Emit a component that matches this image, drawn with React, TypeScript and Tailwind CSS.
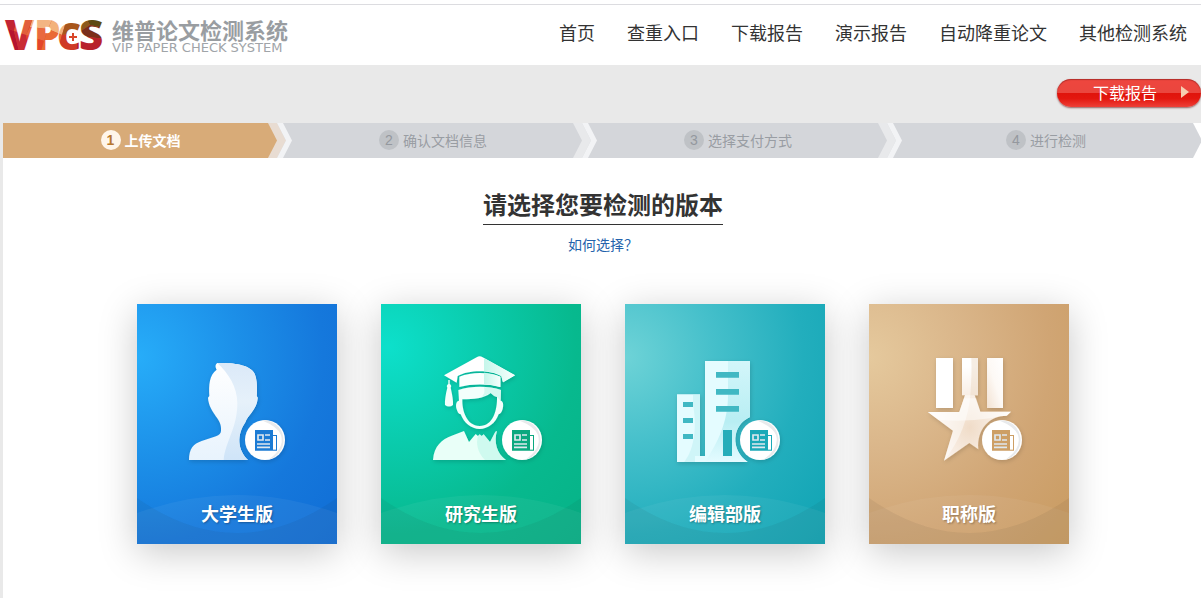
import React from "react";

type Card = {
  id: string;
  label: string;
  viewBox: string;
  badgeX: number;
  gradient: string;
  ink: string;
  art: React.ReactNode;
};

const navItems = ["首页", "查重入口", "下载报告", "演示报告", "自动降重论文", "其他检测系统"];

const steps = [
  { label: "上传文档", grow: "flex-[290]" },
  { label: "确认文档信息", grow: "flex-[305]" },
  { label: "选择支付方式", grow: "flex-[305]" },
  { label: "进行检测", grow: "flex-[298]" },
];

const cards: Card[] = [
  {
    id: "student",
    label: "大学生版",
    viewBox: "21 27 600 720",
    badgeX: 405,
    gradient: "bg-[radial-gradient(circle_at_0%_22%,#27adf9_0%,#1c8fe8_38%,#1578dc_68%,#106dd5_100%)]",
    ink: "#1c7bd4",
    art: (
      <>
        <path
          d="M177 495C177 462 190 446 215 438L258 424Q273 418 273 408V398C273 370 237 352 234 308L238 303C236 270 238 240 260 224C254 214 257 207 262 204C310 202 362 210 373 235C381 250 382 280 380 303L383 308C381 345 352 360 346 382C320 420 322 465 354 495Z"
          fill="url(#student-a)"
        />
        <path
          d="M262 204C310 202 362 210 373 235C381 250 382 280 380 303L383 308C381 345 352 360 346 382C320 420 322 465 354 495H281C286 440 322 400 322 325C322 275 295 235 262 204Z"
          fill="url(#student-b)"
        />
      </>
    ),
  },
  {
    id: "graduate",
    label: "研究生版",
    viewBox: "18 27 600 720",
    badgeX: 441,
    gradient: "bg-[radial-gradient(circle_at_4%_18%,#0de0cb_0%,#0acbac_35%,#07b98e_68%,#07b287_100%)]",
    ink: "#0ba87f",
    art: (
      <>
        <path d="M207 241L305 187Q314 180 323 187L420 241L384 262L379 243C345 224 282 224 248 243L245 263Z" fill="#fff" />
        <path d="M323 187L420 241L384 262L379 243C365 235 347 230 327 229V189Z" fill="url(#cap)" />
        <path d="M253 245C290 230 340 230 376 245V276C340 266 290 266 253 276Z" fill="#fbfffe" />
        <path d="M327 233Q356 236 376 245V276Q350 269 327 268Z" fill="url(#cap)" />
        <path
          d="M250 285C290 272 340 272 378 285L377 317C385 318 386 330 383 342C380 352 376 357 371 358C362 384 340 402 314 402C288 402 267 384 257 358C250 357 247 350 244 340C242 328 244 318 252 317ZM262 313C261 345 274 393 314 393C354 393 367 345 366 306Q355 303 347 294C325 311 298 312 262 313Z"
          fill="#f3fffc"
          fillRule="evenodd"
        />
        <path d="M327 277Q356 277 378 285L377 317L366 306Q355 303 347 294L318 307Q333 296 327 277Z" fill="#b7f4e5" opacity=".5" />
        <path d="M220 255H224V267Q231 272 227 278C232 300 235 317 234 330Q222 339 210 330C209 316 212 298 217 278Q213 272 220 267Z" fill="#f3fffc" />
        <path
          d="M174 495C177 452 201 433 230 422L267 408L282 441L302 417L309 423L314 418L320 423L326 418L345 441L361 410L366 408C356 440 365 475 393 495Z"
          fill="#e9fff8"
        />
        <path d="M309 423L314 418L320 423L326 418L345 441L361 410L366 408C356 440 365 475 393 495H330C306 470 303 445 309 423Z" fill="#b5f6e6" opacity=".5" />
      </>
    ),
  },
  {
    id: "editor",
    label: "编辑部版",
    viewBox: "30 27 600 720",
    badgeX: 435,
    gradient: "bg-[radial-gradient(circle_at_0%_22%,#6ed3d7_0%,#46c0cb_32%,#22aebd_65%,#0fa3b3_100%)]",
    ink: "#1ca9b8",
    art: (
      <>
        <path d="M186 298H255V483H270V198H405V366C350 390 345 465 398 501H186Z" fill="#e4fcff" />
        <path d="M339 198H405V366C350 390 345 465 398 501H270C310 440 339 380 339 300Z" fill="url(#editor-b)" />
        <path d="M234 298H255V483H240V501H208C240 460 246 390 234 330Z" fill="#b9edf1" opacity=".5" />
        <g fill="#3fb8c3">
          <path d="M303 231H372V248H303ZM303 282H372V299H303ZM303 333H372V350H303Z" />
          <path d="M204 321H234V336H204ZM204 369H234V384H204ZM204 417H234V432H204Z" />
          <path d="M324 405H351V483H324Z" fill="#27adb9" />
        </g>
      </>
    ),
  },
  {
    id: "title",
    label: "职称版",
    viewBox: "27 27 600 720",
    badgeX: 426,
    gradient: "bg-[radial-gradient(circle_at_0%_22%,#e5c99d_0%,#dab68a_34%,#d0a574_66%,#c99b60_100%)]",
    ink: "#cd9f65",
    art: (
      <>
        <path d="M228 189H279V339H228Z" fill="#fff" />
        <path d="M306 189H354V301H344L361 350H453L440 362C390 362 350 400 355 463L328 444L252 497L279 407L204 351H298L315 301H306Z" fill="url(#title-a)" />
        <path d="M334 189H354V301H331Q336 240 334 189Z" fill="#ecd6c1" opacity=".45" />
        <path d="M204 351H298L315 301H331C326 365 300 440 252 497L279 407Z" fill="#fff" opacity=".45" />
        <path d="M204 351H298L312 310H348L361 350H453L440 362Q415 362 397 369Q310 382 235 374Z" fill="#fff" opacity=".5" />
        <path d="M381 189H429V339H381Z" fill="url(#title-b)" />
      </>
    ),
  },
];

function Logo() {
  return (
    <a href="#" className="flex items-center gap-1 pl-1">
      <svg viewBox="0 -10 104 60" className="h-[60px] w-[104px]" aria-label="VPCS">
        <defs>
          <pattern id="facets" width="104" height="60" patternUnits="userSpaceOnUse">
            <rect width="104" height="60" fill="#d9472b" />
            <path d="M0 0H14L10 16L0 12Z" fill="#c22433" />
            <path d="M14 0H30L22 20L10 16Z" fill="#e2603c" />
            <path d="M0 12L10 16L16 40H0Z" fill="#b5152f" />
            <path d="M10 16L22 20L26 40H16Z" fill="#c92b35" />
            <path d="M30 0H50L44 14L26 12Z" fill="#f3b583" />
            <path d="M26 12L44 14L40 26L22 20Z" fill="#e9693f" />
            <path d="M50 0H64L58 20L44 14Z" fill="#f3b27c" />
            <path d="M22 20L40 26L36 40H26Z" fill="#e4452c" />
            <path d="M40 26L44 14L58 20L52 40H36Z" fill="#ea6a35" />
            <path d="M64 0H80L74 18L58 20Z" fill="#a8561c" />
            <path d="M58 20L74 18L72 40H52Z" fill="#cf3a26" />
            <path d="M80 0H104V14L86 10Z" fill="#5e4a12" />
            <path d="M80 0L86 10L74 18Z" fill="#8c5a1c" />
            <path d="M86 10L104 14V24L82 22L74 18Z" fill="#7b2f1c" />
            <path d="M74 18L82 22L104 24V40H72Z" fill="#b8222c" />
          </pattern>
        </defs>
        <text x="1 30 53 75" y="35" fontFamily="'Open Sans', sans-serif" fontWeight="800" fontSize="42" fill="url(#facets)">
          VP<tspan fontSize="37">C</tspan>S
        </text>
        <circle cx="69" cy="22" r="6" fill="#fff" />
        <path d="M65 22h8M69 18v8" stroke="#d9472b" strokeWidth="2" />
      </svg>
      <span className="flex flex-col pt-px">
        <span className="text-[22px] leading-6 font-bold text-[#999da1]">维普论文检测系统</span>
        <span className="font-['DejaVu_Sans'] text-[13px] leading-[14px] whitespace-nowrap text-[#a0a4a8]">VIP PAPER CHECK SYSTEM</span>
      </span>
    </a>
  );
}

function Chevron({ first }: { first: boolean }) {
  return (
    <svg viewBox="0 0 25 35" className="h-[35px] w-[25px] shrink-0">
      <path d="M0 0H25V35H0Z" fill="#d4d6da" />
      <path d="M0 0H9L18 17.500L9 35H0Z" fill={first ? "#e8dcd2" : "#e8e9eb"} />
      <path d="M0 0L9 17.500L0 35Z" fill={first ? "#d8ab78" : "#d4d6da"} />
      <path d="M9 0H15L24 17.500L15 35H9L18 17.500Z" fill="#f2f3f5" />
    </svg>
  );
}

function Steps() {
  return (
    <ol className="flex h-[35px] bg-white">
      {steps.map((step, i) => {
        const first = i === 0;
        const last = i === steps.length - 1;
        return (
          <li key={step.label} className={`flex min-w-0 ${step.grow}`}>
            <span
              className={`flex flex-1 items-center justify-center gap-1 pb-0.5 text-sm whitespace-nowrap ${
                first ? "bg-[#d8ab78] pl-2.5 font-bold text-white" : "bg-[#d4d6da] text-[#999da3]"
              } ${last ? "pr-1" : ""}`}
            >
              <span
                className={`flex size-5 items-center justify-center rounded-full font-['Liberation_Sans'] ${
                  first ? "bg-[#fff5ea] text-[#b87830]" : "bg-[#bfc2c6] text-[#94989e]"
                }`}
              >
                {i + 1}
              </span>
              {step.label}
            </span>
            {last ? (
              <svg viewBox="0 0 8 35" className="h-[35px] w-2 shrink-0">
                <path d="M0 0L9 17.500L0 35Z" fill="#d4d6da" />
              </svg>
            ) : (
              <Chevron first={first} />
            )}
          </li>
        );
      })}
    </ol>
  );
}

function Badge({ x, ink }: { x: number; ink: string }) {
  return (
    <g transform={`translate(${x} 435)`}>
      <circle r="60" fill="#fff" filter="url(#soft)" />
      <path d="M-10 -59A60 60 0 0 1 10 59Q60 25 48 -15Q38 -40 -10 -59Z" fill="#e8eaec" />
      <path d="M-30 -30H24V-15H36V32H-30Z" fill={ink} />
      <path d="M24 -12H33V29H24Z" fill="#fff" />
      <path d="M-21 -15H-6V0H-21Z" fill="none" stroke="#dfe8ee" strokeWidth="5" />
      <path d="M0 -15H15M0 0H15M-24 12H15M-24 22H15" stroke="#dfe8ee" strokeWidth="5" />
    </g>
  );
}

function VersionCard({ card }: { card: Card }) {
  return (
    <a href={`#${card.id}`} className={`grid h-60 w-[200px] shadow-[0_8px_36px_rgba(0,0,0,0.22)] ${card.gradient}`}>
      <svg viewBox={card.viewBox} className="col-start-1 row-start-1 h-60 w-[200px]" aria-hidden="true">
        <svg x={card.viewBox.split(" ")[0]} y="27" width="600" height="720" viewBox="0 0 200 240">
          <path d="M0 209Q100 173 200 209V240H0Z" fill="#fff" opacity=".05" />
          <path d="M0 194Q100 264 200 194V240H0Z" fill="#222" opacity=".06" />
        </svg>
        <g filter="url(#soft)">{card.art}</g>
        <Badge x={card.badgeX} ink={card.ink} />
      </svg>
      <span className="col-start-1 row-start-1 self-end pb-[17px] text-center text-lg leading-7 font-bold text-white [text-shadow:1px_1px_2px_rgba(0,0,0,0.3)]">
        {card.label}
      </span>
    </a>
  );
}

export default function App() {
  return (
    <div className="min-h-screen bg-[#e9e9e9] pt-1 font-['Noto_Sans_CJK_SC',sans-serif] [background-image:linear-gradient(#fff_4px,transparent_4px)]">
      <svg className="absolute size-0" aria-hidden="true">
        <defs>
          <filter id="soft" x="-20%" y="-20%" width="140%" height="140%">
            <feDropShadow dx="2" dy="5" stdDeviation="6" floodColor="#000" floodOpacity=".16" />
          </filter>
          <linearGradient id="cap">
            <stop stopColor="#c4f6ea" />
            <stop offset="1" stopColor="#f6fffd" />
          </linearGradient>
          <linearGradient id="student-a" x2="0" y2="1">
            <stop stopColor="#fff" />
            <stop offset="1" stopColor="#e8f3fd" />
          </linearGradient>
          <linearGradient id="student-b" x2="0" y2="1">
            <stop stopColor="#dbe9f8" />
            <stop offset=".4" stopColor="#e6f1fa" />
            <stop offset="1" stopColor="#cfe4f8" />
          </linearGradient>
          <linearGradient id="editor-b" x2="0" y2="1">
            <stop stopColor="#d3f6fa" />
            <stop offset=".6" stopColor="#b8eef3" />
            <stop offset="1" stopColor="#e4fbff" />
          </linearGradient>
          <radialGradient id="title-a" cx=".5" cy=".68" r=".6">
            <stop stopColor="#f0dcc8" />
            <stop offset=".5" stopColor="#f8ede3" />
            <stop offset="1" stopColor="#fff" />
          </radialGradient>
          <linearGradient id="title-b" x1="1" x2="0" y2="1">
            <stop stopColor="#fff" />
            <stop offset=".5" stopColor="#fdf9f5" />
            <stop offset="1" stopColor="#f3e2d2" />
          </linearGradient>
        </defs>
      </svg>

      <header className="flex h-[61px] items-center justify-between border-t border-[#dcdce0] bg-white pr-[14px]">
        <Logo />
        <nav className="flex gap-8 pb-1.5 text-lg text-[#333]">
          {navItems.map((item) => (
            <a key={item} href="#" className="whitespace-nowrap">
              {item}
            </a>
          ))}
        </nav>
      </header>

      <div className="flex h-[58px] items-center justify-end pb-0.5">
        <button
          type="button"
          className="flex h-7 w-36 items-center justify-end gap-6 rounded-full bg-[linear-gradient(#ee463e_0%,#ea463e_50%,#e0140c_50%,#e3170f_70%,#ee4038_100%)] pr-3 pb-0.5 text-base text-white shadow-[0_1px_2px_rgba(90,0,0,0.6),inset_0_1px_1px_rgba(120,20,20,0.5)]"
        >
          下载报告
          <svg viewBox="0 0 8 12" className="h-3 w-2">
            <path d="M0 0L8 6L0 12Z" fill="#f6cdb0" />
          </svg>
        </button>
      </div>

      <div className="pl-[3px]">
        <Steps />
        <main className="flex flex-col items-center bg-white pt-7 pb-14 pl-0.5">
          <h1 className="border-b border-[#333] pb-0.5 text-2xl leading-9 font-bold text-[#333]">请选择您要检测的版本</h1>
          <a href="#" className="mt-[7px] text-sm leading-6 text-[#2463ac]">
            如何选择？
          </a>
          <div className="mt-12 flex flex-wrap justify-center gap-11">
            {cards.map((card) => (
              <VersionCard key={card.id} card={card} />
            ))}
          </div>
        </main>
      </div>
    </div>
  );
}
